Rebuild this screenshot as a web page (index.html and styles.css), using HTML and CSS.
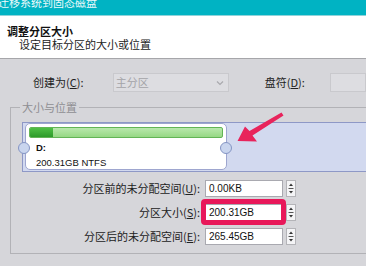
FILE: index.html
```html
<!DOCTYPE html>
<html>
<head>
<meta charset="utf-8">
<link rel="stylesheet" href="styles.css">
</head>
<body>
<div class="titlebar"><span class="title">迁移系统到固态磁盘</span></div>
<div class="header">
  <div class="h-title">调整分区大小</div>
  <div class="h-sub">设定目标分区的大小或位置</div>
</div>
<div class="content">
  <div class="toprow">
    <span class="lbl lbl-create">创建为(<u>C</u>):</span>
    <div class="combo">
      <span class="combo-text">主分区</span>
      <svg class="chev" width="8" height="6" viewBox="0 0 8 6"><path d="M1 1.5 L4 4.5 L7 1.5" fill="none" stroke="#a9a9ad" stroke-width="1.2"/></svg>
    </div>
    <span class="lbl lbl-letter">盘符(<u>D</u>):</span>
    <div class="combo2"></div>
  </div>
  <fieldset class="group">
    <legend>大小与位置</legend>
    <div class="strip">
      <div class="part">
        <div class="bar"><div class="used" style="width:23px"></div></div>
        <div class="pname">D:</div>
        <div class="pinfo">200.31GB NTFS</div>
      </div>
      <span class="handle handle-left"></span>
      <span class="handle handle-right"></span>
    </div>
    <div class="rows">
      <div class="row">
        <span class="rlabel">分区前的未分配空间(<u>U</u>):</span>
        <div class="input">0.00KB</div>
        <svg class="spin" width="10" height="17" viewBox="0 0 10 17"><rect x="0.5" y="0.5" width="9" height="16" fill="#f4f4f6" stroke="#b4b4b8"/><path d="M3 6 L7 6 L5 3.5 Z" fill="#333"/><path d="M2.5 8.5 H7.5" stroke="#555" stroke-width="1"/><path d="M3 11 L7 11 L5 13.5 Z" fill="#333"/></svg>
      </div>
      <div class="row">
        <span class="rlabel">分区大小(<u>S</u>):</span>
        <div class="input">200.31GB</div>
        <svg class="spin" width="10" height="17" viewBox="0 0 10 17"><rect x="0.5" y="0.5" width="9" height="16" fill="#f4f4f6" stroke="#b4b4b8"/><path d="M3 6 L7 6 L5 3.5 Z" fill="#333"/><path d="M2.5 8.5 H7.5" stroke="#555" stroke-width="1"/><path d="M3 11 L7 11 L5 13.5 Z" fill="#333"/></svg>
      </div>
      <div class="row">
        <span class="rlabel">分区后的未分配空间(<u>E</u>):</span>
        <div class="input">265.45GB</div>
        <svg class="spin" width="10" height="17" viewBox="0 0 10 17"><rect x="0.5" y="0.5" width="9" height="16" fill="#f4f4f6" stroke="#b4b4b8"/><path d="M3 6 L7 6 L5 3.5 Z" fill="#333"/><path d="M2.5 8.5 H7.5" stroke="#555" stroke-width="1"/><path d="M3 11 L7 11 L5 13.5 Z" fill="#333"/></svg>
      </div>
    </div>
  </fieldset>
</div>
<svg class="arrow" width="366" height="266" viewBox="0 0 366 266">
  <polygon points="237.5,141 245,126.5 249.5,131 281.5,112.5 283.5,115.5 252.5,135.5 257,141.5" fill="#e8245c"/>
</svg>
<div class="highlight"></div>
</body>
</html>
```

FILE: styles.css
```css
body {
  margin: 0;
  width: 366px;
  height: 266px;
  overflow: hidden;
  position: relative;
  background: #d6d6da;
  font-family: "Noto Sans CJK SC", "Noto Sans", sans-serif;
  font-size: 11px;
  color: #222;
}

.titlebar {
  height: 15px;
  background: #00b3c3;
  border-bottom: 1px solid #8fd3da;
  overflow: hidden;
}

.title {
  display: block;
  color: #eefafb;
  font-size: 11px;
  line-height: 11px;
  margin-top: -3px;
  margin-left: -2px;
}

.header {
  height: 42px;
  box-sizing: border-box;
  background: #fff;
  padding: 9px 0 0 7px;
}

.h-title {
  font-weight: bold;
  line-height: 13px;
  color: #111;
}

.h-sub {
  line-height: 12px;
  padding-left: 12px;
  color: #222;
}

.content {
  border-top: 1px solid #a6a6aa;
}

.toprow {
  display: flex;
  align-items: center;
  height: 19px;
  margin: 14px 0 9px 0;
}

.lbl {
  line-height: 13px;
  color: #222;
}

.lbl-create {
  width: 90px;
  padding-left: 33px;
}

.combo {
  width: 130px;
  height: 19px;
  box-sizing: border-box;
  border: 1px solid #c9c9cd;
  background: #dddde1;
  display: flex;
  align-items: center;
  justify-content: space-between;
  padding: 0 4px 0 2px;
}

.combo-text {
  color: #a4a4a8;
  line-height: 13px;
}

.lbl-letter {
  width: 74px;
  margin-left: 36px;
}

.combo2 {
  width: 40px;
  height: 19px;
  box-sizing: border-box;
  border: 1px solid #c9c9cd;
  background: #dddde1;
}

.group {
  margin: 0 0 0 10px;
  padding: 0 0 8px 0;
  border: 1px solid #b2b2b6;
  width: 420px;
  min-width: 0;
}

.group legend {
  margin-left: 9px;
  padding: 0 2px;
  line-height: 13px;
  color: #8e8e92;
}

.strip {
  position: relative;
  margin: 8px 0 0 11px;
  height: 48px;
  border: 1px solid #8e98c6;
  border-right: none;
  background: #d2d9ef;
  padding-left: 2px;
}

.part {
  width: 202px;
  height: 47px;
  box-sizing: border-box;
  background: #fff;
  border: 1px solid #9ea6cf;
  border-radius: 5px;
  padding: 3px 3px 0 3px;
}

.bar {
  height: 11px;
  box-sizing: border-box;
  border: 1px solid #63b456;
  background: linear-gradient(#b9e8ad, #96d884);
  border-radius: 2px;
  overflow: hidden;
}

.used {
  height: 100%;
  background: linear-gradient(#4fbf45, #2d9a2a);
}

.pname {
  font-family: "Liberation Sans", Arial, sans-serif;
  font-weight: bold;
  font-size: 9.5px;
  line-height: 12px;
  margin: 4px 0 0 7px;
  color: #111;
}

.pinfo {
  font-family: "Liberation Sans", Arial, sans-serif;
  font-size: 9.5px;
  line-height: 12px;
  margin: 3px 0 0 7px;
  color: #111;
}

.handle {
  position: absolute;
  top: 19px;
  width: 12px;
  height: 12px;
  box-sizing: border-box;
  border-radius: 50%;
  border: 1px solid #8595c4;
  background: #c9d5ee;
}

.handle-left {
  left: -5px;
}

.handle-right {
  left: 197px;
}

.rows {
  display: flex;
  flex-direction: column;
  gap: 7px;
  margin-top: 8px;
}

.row {
  display: flex;
  align-items: center;
  height: 17px;
}

.rlabel {
  width: 189px;
  text-align: right;
  line-height: 13px;
  color: #222;
}

.input {
  width: 78px;
  height: 17px;
  box-sizing: border-box;
  margin-left: 5px;
  background: #fff;
  border: 1px solid #a9a9b0;
  font-family: "Liberation Sans", Arial, sans-serif;
  font-size: 10px;
  line-height: 15px;
  padding-left: 3px;
  color: #111;
}

.spin {
  margin-left: 3px;
  display: block;
}

.arrow {
  position: absolute;
  left: 0;
  top: 0;
  pointer-events: none;
}

.highlight {
  position: absolute;
  left: 201px;
  top: 199px;
  width: 75px;
  height: 16px;
  border: 5px solid #e8185a;
  border-radius: 4px;
  pointer-events: none;
}
```
